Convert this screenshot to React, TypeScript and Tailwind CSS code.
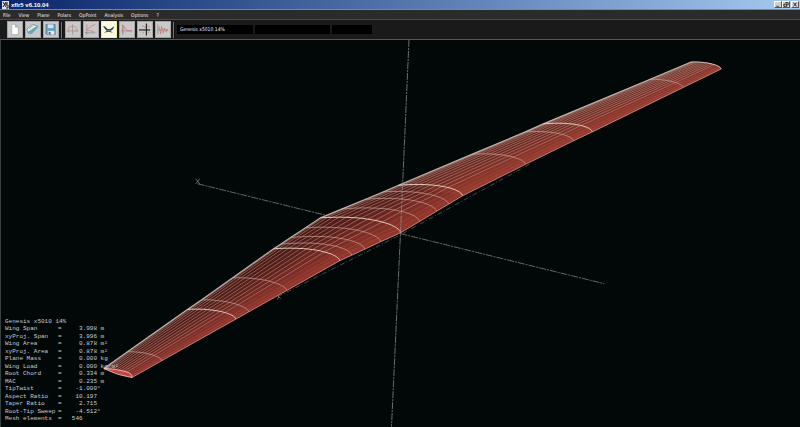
import React from "react"

type Point = [number, number]

interface Rib {
  te: Point
  le: Point
  bold?: boolean
}

interface ToolButton {
  label: string
  active?: boolean
  icon: React.ReactNode
}

const MENUS = ["File", "View", "Plane", "Polars", "OpPoint", "Analysis", "Options", "?"]

// Trailing and leading edge of each rib, from the left tip to the right tip
const RIBS: Rib[] = [
  { te: [103, 369], le: [131, 378], bold: true },
  { te: [127, 352], le: [161, 361] },
  { te: [187, 309.7], le: [235, 319.5], bold: true },
  { te: [201, 300], le: [248, 312.2] },
  { te: [232, 278], le: [286, 290.8] },
  { te: [273, 249], le: [339, 261], bold: true },
  { te: [280, 244.4], le: [351, 255.5] },
  { te: [290, 237.8], le: [364, 249.5] },
  { te: [305, 228], le: [380, 242] },
  { te: [320, 218], le: [400, 233], bold: true },
  { te: [341, 209.3], le: [419, 221.7] },
  { te: [365, 199.4], le: [436, 211.5] },
  { te: [383, 192], le: [448, 204.4] },
  { te: [398, 185.5], le: [462, 196], bold: true },
  { te: [472, 154.3], le: [525, 164.5] },
  { te: [525, 132], le: [573, 141] },
  { te: [543, 124], le: [592, 132], bold: true },
  { te: [650, 79.3], le: [683, 87.5] },
  { te: [691, 62], le: [721, 69], bold: true },
]

// Chordwise panel positions, 0 at the trailing edge
const PANELS = [0, 0.03, 0.08, 0.15, 0.23, 0.32, 0.41, 0.5, 0.59, 0.68, 0.77, 0.85, 0.92, 0.97, 1]

const RESULTS: [string, string, string][] = [
  ["Wing Span", "3.998", " m"],
  ["xyProj. Span", "3.996", " m"],
  ["Wing Area", "0.878", " m²"],
  ["xyProj. Area", "0.878", " m²"],
  ["Plane Mass", "0.000", " kg"],
  ["Wing Load", "0.000", " kg/m²"],
  ["Root Chord", "0.334", " m"],
  ["MAC", "0.235", " m"],
  ["TipTwist", "-1.000", "°"],
  ["Aspect Ratio", "10.197", ""],
  ["Taper Ratio", "2.715", ""],
  ["Root-Tip Sweep", "-4.512", "°"],
  ["Mesh elements", "546    ", ""],
]

function surfacePoint(rib: Rib, t: number): Point {
  const dx = rib.le[0] - rib.te[0]
  const dy = rib.le[1] - rib.te[1]
  const camber = 0.25 * dx * t * Math.sqrt(1 - t)
  return [rib.te[0] + dx * t, rib.te[1] + dy * t - camber]
}

function toPoints(points: Point[]) {
  return points.map(([x, y]) => `${x.toFixed(1)},${y.toFixed(1)}`).join(" ")
}

function ribCurve(rib: Rib) {
  const points: Point[] = []
  for (let i = 0; i <= 20; i++) points.push(surfacePoint(rib, Math.sin((i / 20) * (Math.PI / 2))))
  return toPoints(points)
}

function panelColor(t: number) {
  const k = Math.pow(t, 1.8)
  return `rgb(${Math.round(72 + 78 * k)}, ${Math.round(24 + 30 * k)}, ${Math.round(19 + 26 * k)})`
}

function Wing() {
  const rightPanel = RIBS.slice(13)
  return (
    <g fill="none">
      {PANELS.slice(0, -1).map((t, i) => {
        const next = PANELS[i + 1]
        const near = RIBS.map((r) => surfacePoint(r, t))
        const far = RIBS.map((r) => surfacePoint(r, next)).reverse()
        const color = panelColor((t + next) / 2)
        return <polygon key={t} points={toPoints([...near, ...far])} fill={color} stroke={color} strokeWidth="0.5" />
      })}
      <polygon points={toPoints([...rightPanel.map((r) => r.te), ...rightPanel.map((r) => r.le).reverse()])} fill="#b04a38" opacity="0.2" />
      {PANELS.slice(1, -1).map((t) => (
        <polyline
          key={t}
          points={toPoints(RIBS.map((r) => surfacePoint(r, t)))}
          stroke="#cfa99c"
          strokeWidth="0.7"
          opacity={t > 0.8 ? 0.25 : 0.7}
        />
      ))}
      <polyline points={toPoints(RIBS.map((r) => r.le))} stroke="#c0897e" strokeWidth="0.9" />
      <polyline points={toPoints(RIBS.map((r) => r.te))} stroke="#bdb4ad" strokeWidth="1.2" />
      {RIBS.map((r) => (
        <polyline
          key={r.te[0]}
          points={ribCurve(r)}
          stroke={r.bold ? "#ecd8cc" : "#d8b3a6"}
          strokeWidth={r.bold ? 0.9 : 0.7}
          opacity={r.bold ? 1 : 0.85}
        />
      ))}
      <path d="M103 369 Q117 376 131 378 Q132 374 125 372 Q115 369 103 369Z" fill="#c4473f" stroke="#eecbc0" strokeWidth="0.8" />
    </g>
  )
}

function Viewport() {
  return (
    <svg viewBox="0 40 800 387" className="block h-auto w-full" role="img" aria-label="3D view of the wing">
      <g stroke="#8b9090" strokeWidth="0.7" fill="none">
        <path d="M197 184L604 284" strokeDasharray="7 1 2 1" />
        <path d="M277 297L400 235L530 164" stroke="#5c6a62" strokeDasharray="5 2 1 2" />
        <path d="M276 294L278 297L277 300M278 297L280 299" />
        <path d="M195 179L199 184M199 179L195 184" />
      </g>
      <Wing />
      <path d="M408.5 40L400 233L391 427" stroke="#959999" strokeWidth="0.7" strokeDasharray="7 1 2 1" fill="none" />
    </svg>
  )
}

const FILE_TOOLS: ToolButton[] = [
  {
    label: "New project",
    icon: <path d="M5 3H9L12 6V14H5Z M9 3V6H12" fill="#fff" stroke="#8d979c" strokeWidth="0.6" />,
  },
  {
    label: "Open project",
    icon: (
      <>
        <path d="M2 8L8 3L14 5L7 13L3 12Z" fill="#e8f4f8" stroke="#52757f" strokeWidth="0.7" />
        <path d="M3 11L12 5L14 6L7 13L3 12Z" fill="#6fa3b5" />
        <path d="M4 8L9 4" stroke="#9db07f" />
      </>
    ),
  },
  {
    label: "Save project",
    icon: (
      <>
        <path d="M3 3H13V14H4L3 13Z" fill="#6c9dbb" stroke="#4f7690" strokeWidth="0.6" />
        <path d="M5 3H11V7H5Z" fill="#cfe6f0" />
        <path d="M5 10H12V14H5Z" fill="#e5edf0" />
        <path d="M6 11H8V14H6Z" fill="#426681" />
      </>
    ),
  },
]

const VIEW_TOOLS: ToolButton[] = [
  {
    label: "Operating point",
    icon: (
      <>
        <path d="M2 10H14M8 3V14" stroke="#888" strokeWidth="0.7" />
        <path d="M3 11Q3 5 8 5Q13 5 13 11" stroke="#cb7c7c" strokeWidth="0.8" />
      </>
    ),
  },
  {
    label: "Polars",
    icon: (
      <>
        <path d="M4 3V14M2 12H13" stroke="#888" strokeWidth="0.7" />
        <path d="M13 3Q7 5 4 9L12 11" stroke="#cb7c7c" strokeWidth="0.8" />
      </>
    ),
  },
  {
    label: "3D view",
    active: true,
    icon: (
      <>
        <path d="M2 5L4 5L7 8L10 8L14 5L13 8L10 10L13 12L8 11L3 12L6 10Z" fill="#33434f" />
        <path d="M6 9.500H10" stroke="#829cad" strokeWidth="0.8" />
      </>
    ),
  },
  {
    label: "Cp view",
    icon: (
      <>
        <path d="M4 3V14M2 10H14" stroke="#888" strokeWidth="0.7" />
        <path d="M4 13V4L7 8L9 10L14 10" stroke="#d46464" strokeWidth="0.8" />
      </>
    ),
  },
  {
    label: "Stability polars",
    icon: (
      <>
        <path d="M2 9H14" stroke="#222" strokeWidth="1.3" />
        <path d="M10 2V15" stroke="#222" strokeWidth="1.2" />
        <path d="M6 5H7M6 12H7M12 5H13M12 12H13M8 6H9" stroke="#ca5252" />
      </>
    ),
  },
  {
    label: "Time response",
    icon: (
      <>
        <path d="M3 3V14M2 9H14" stroke="#888" strokeWidth="0.7" />
        <path d="M4 5L6 13L7 5L9 12L10 7L12 11L13 8L14 10" stroke="#d46464" strokeWidth="0.7" />
      </>
    ),
  },
]

function ToolGroup({ tools }: { tools: ToolButton[] }) {
  return (
    <div className="flex gap-0.5">
      {tools.map((tool) => (
        <button
          key={tool.label}
          type="button"
          aria-label={tool.label}
          aria-pressed={tool.active}
          className={
            tool.active
              ? "h-[17px] w-4 border border-[#f0f0a0] bg-[#fafbe0]"
              : "h-[17px] w-4 border border-[#a5a5a5] bg-[#c9c9c9]"
          }
        >
          <svg viewBox="1 1 15 15" className="h-full w-full" fill="none">
            {tool.icon}
          </svg>
        </button>
      ))}
    </div>
  )
}

function Separator() {
  return <div className="h-4 w-0.5 border-l border-[#777] bg-[#101010]" />
}

function ResultsTable() {
  return (
    <table className="absolute bottom-1 left-1 h-[105px] border-collapse font-['Liberation_Mono',monospace] text-[6px] leading-[7px] whitespace-pre text-[#c9cccc]">
      <tbody>
        <tr>
          <th colSpan={4} className="p-0 text-left font-normal">Genesis x5010 14%</th>
        </tr>
        {RESULTS.map(([name, value, unit]) => (
          <tr key={name}>
            <th scope="row" className="w-[53px] p-0 text-left font-normal">{name}</th>
            <td className="w-1 p-0">=</td>
            <td className="w-[35px] p-0 text-right">{value}</td>
            <td className="p-0">{unit}</td>
          </tr>
        ))}
      </tbody>
    </table>
  )
}

const WINDOW_BUTTONS = [
  { label: "Minimize", path: "M2 6H5" },
  { label: "Restore", path: "M3 1H7V4H6M1 3H5V6H1Z" },
  { label: "Close", path: "M2 1L6 6M6 1L2 6" },
]

export default function App() {
  return (
    <div className="flex min-h-screen flex-col bg-[#020808] font-['Liberation_Sans',Arial,sans-serif]">
      <header className="flex h-[10px] items-center justify-between border-b border-[#7888a0] bg-linear-to-r from-[#0a246a] to-[#a6caf0] pr-px pl-0.5">
        <div className="flex items-center gap-0.5">
          <svg viewBox="0 0 7 8" className="h-2 w-[7px]" fill="none">
            <path d="M0 0H7V8H0Z" fill="#e3e5e9" />
            <path d="M1 1L4 6M4 1L1 6M6 2H4V4H6V7H4" stroke="#17191f" />
          </svg>
          <h1 className="text-[6px] leading-[8px] font-bold text-white">xflr5 v6.10.04</h1>
        </div>
        <div className="flex">
          {WINDOW_BUTTONS.map((b) => (
            <button
              key={b.label}
              type="button"
              aria-label={b.label}
              className="h-[7px] w-2 border border-t-white border-r-[#555] border-b-[#555] border-l-white bg-[#d4d0c8] last:ml-px"
            >
              <svg viewBox="0 0 8 7" className="h-full w-full" fill="none" stroke="#111" strokeWidth="1.2">
                <path d={b.path} />
              </svg>
            </button>
          ))}
        </div>
      </header>

      <nav className="flex h-[10px] items-center gap-2 border-b border-[#4a4c4a] bg-[#2a2b2a] pl-[3px] font-['DejaVu_Sans_Condensed','DejaVu_Sans',sans-serif] text-[5px] leading-[8px] text-[#f0f0f0]">
        {MENUS.map((m) => (
          <button key={m} type="button">
            {m}
          </button>
        ))}
      </nav>

      <div className="flex h-5 items-center gap-0.5 border-b border-[#555] bg-[#1a1a1a] pl-[7px]">
        <ToolGroup tools={FILE_TOOLS} />
        <Separator />
        <ToolGroup tools={VIEW_TOOLS} />
        <Separator />
        <select aria-label="Plane" className="h-[9px] w-[76px] appearance-none bg-black px-[3px] font-['DejaVu_Sans_Condensed','DejaVu_Sans',sans-serif] text-[5px] leading-[9px] text-[#f0f0f0]">
          <option>Genesis x5010 14%</option>
        </select>
        <select aria-label="Polar" className="h-[9px] w-[75px] appearance-none bg-black text-[5px]" />
        <select aria-label="Operating point" className="h-[9px] w-10 appearance-none bg-black text-[5px]" />
      </div>

      <main className="relative flex-1 overflow-hidden border-b border-l border-[#3a3f3f]">
        <Viewport />
        <ResultsTable />
      </main>
    </div>
  )
}
